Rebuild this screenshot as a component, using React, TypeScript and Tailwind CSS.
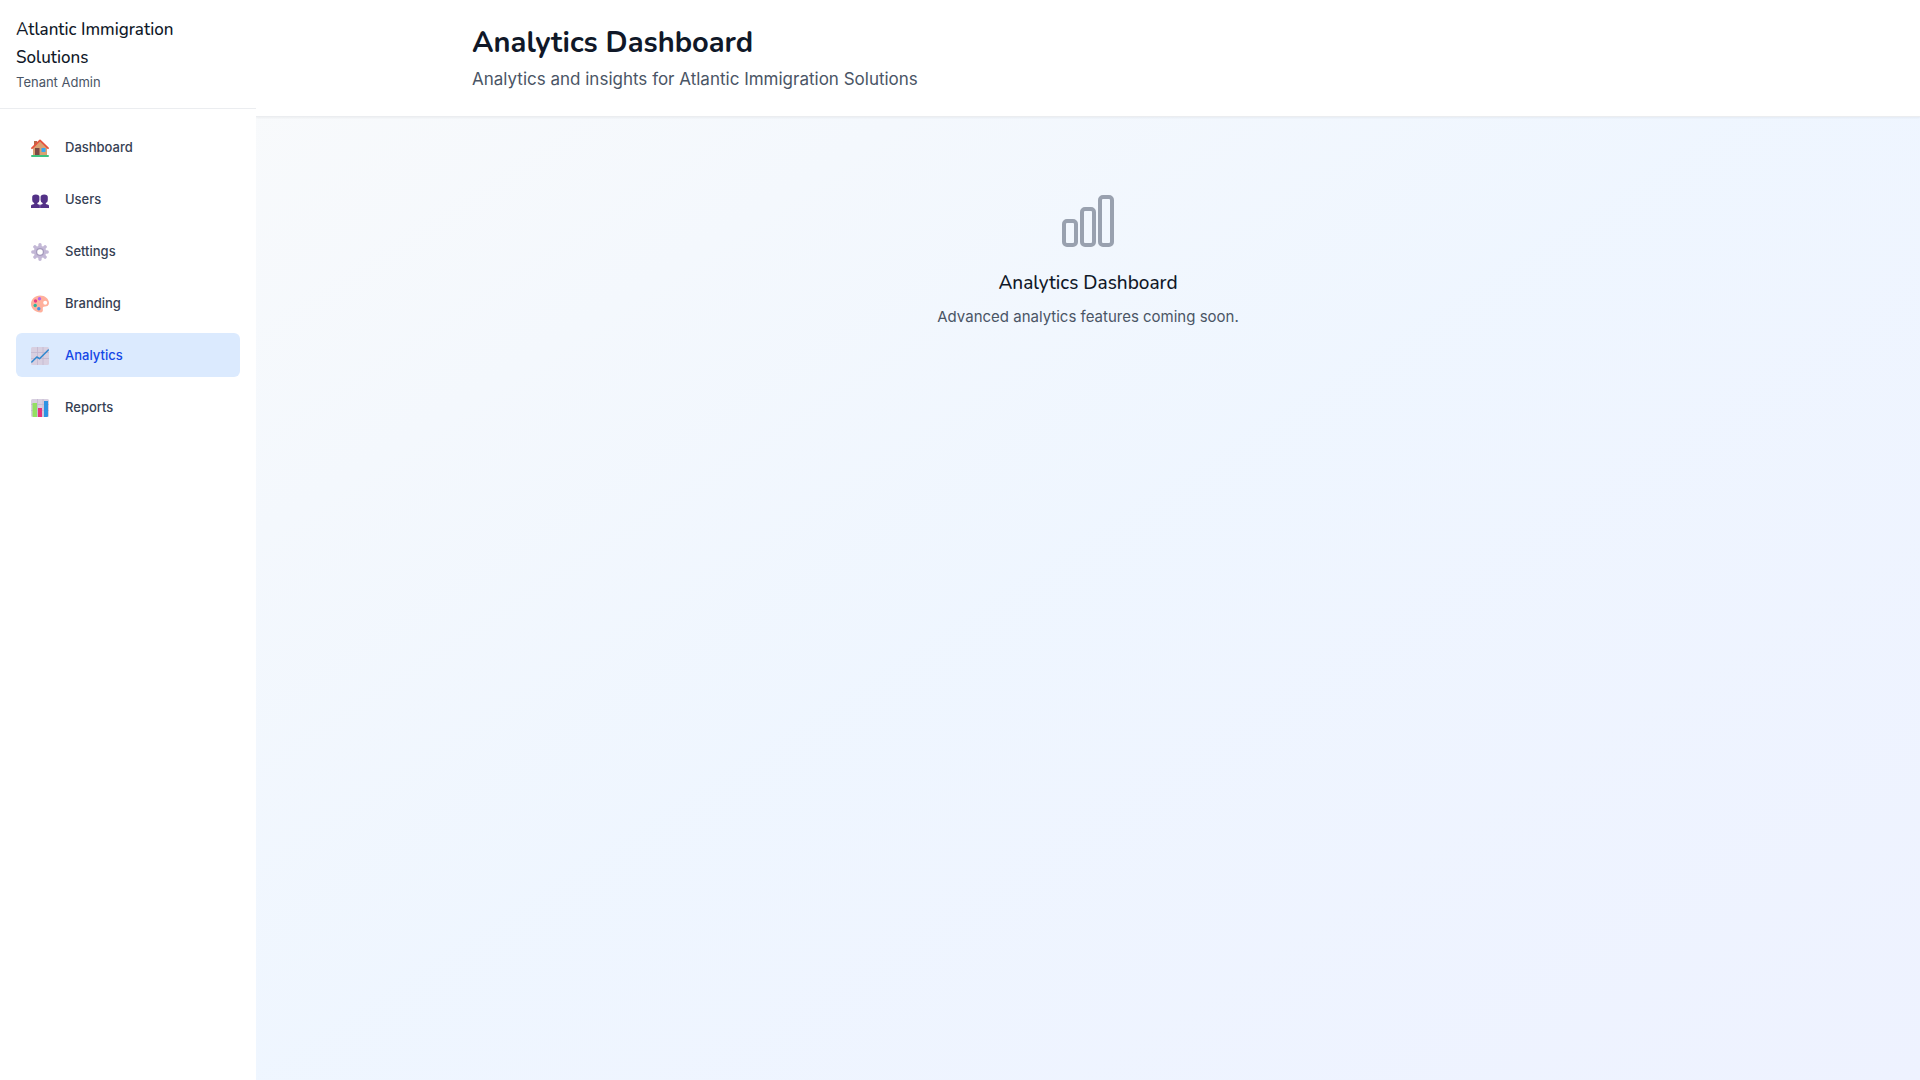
import React from "react";

function House() {
  return (
    <svg viewBox="0 0 18 18" className="size-[18px]" aria-hidden="true">
      <path d="M3 2h3v5H3z" fill="#b8694a" />
      <path d="M9 2 2 8.5V17h14V8.500z" fill="#d9a273" />
      <path d="M4 9h4.500v7H4z" fill="#7b4a45" />
      <path d="M10.500 9h4v4h-4z" fill="#35a8f0" />
      <path d="M1 9.200 9 1.400l8 7.800" fill="none" stroke="#e5533d" strokeWidth="1.800" strokeLinejoin="round" strokeLinecap="round" />
      <rect y="16" width="18" height="2" rx="1" fill="#3fc380" />
    </svg>
  );
}

function People() {
  return (
    <svg viewBox="0 0 18 18" className="size-[18px]" aria-hidden="true">
      <g fill="#533187">
        <path d="M1.200 6Q1.200 3.500 4.800 3.500T8.400 6v3q0 2.500-2 3v1q2.600.5 2.600 1.500V17H0v-2.500Q0 13.500 3.200 13v-1q-2-.5-2-3z" />
        <path d="M9.600 6q0-2.500 3.600-2.500T16.800 6v3q0 2.500-2 3v1q3.200.5 3.200 1.500V17H9v-2.500q0-1 2.600-1.500v-1q-2-.5-2-3z" />
      </g>
      <path d="M9 13.500V17" stroke="#7a57ae" />
    </svg>
  );
}

function Gear() {
  return (
    <svg viewBox="0 0 18 18" className="size-[18px]" aria-hidden="true">
      <g stroke="#c3b8d6" strokeWidth="3.400" strokeLinecap="round">
        <path d="M9 1.800v14.400M1.800 9h14.400M3.900 3.900l10.200 10.200M14.100 3.900 3.900 14.100" />
      </g>
      <circle cx="9" cy="9" r="6.200" fill="#c3b8d6" />
      <circle cx="9" cy="9" r="3.400" fill="#fff" stroke="#a398bb" strokeWidth="1.200" />
    </svg>
  );
}

function Palette() {
  return (
    <svg viewBox="0 0 18 18" className="size-[18px]" aria-hidden="true">
      <path d="M9 .5c5 0 9 3.500 9 7.500 0 2.500-2 3.500-4 3.500-1.800 0-2.500.8-2.200 2.500.4 2-.3 3.500-2.300 3.500C4.500 17.500 0 13.500 0 9S4 .5 9 .5z" fill="#ffb09c" />
      <circle cx="14.200" cy="7.800" r="2" fill="#fff" />
      <circle cx="8.500" cy="3.800" r="1.700" fill="#b565e8" />
      <circle cx="4.500" cy="6" r="1.700" fill="#e83e82" />
      <circle cx="4.200" cy="10.500" r="1.700" fill="#2fb59e" />
      <circle cx="7.800" cy="13.700" r="1.700" fill="#4390e6" />
    </svg>
  );
}

function ChartSheet() {
  return (
    <>
      <rect width="18" height="18" rx="1.500" fill="#d8cfe0" />
      <path d="M6.500 0v18M12 0v18M0 5.500h18M0 11.500h18" stroke="#c3b7cf" strokeWidth=".8" />
    </>
  );
}

function LineChart() {
  return (
    <svg viewBox="0 0 18 18" className="size-[18px]" aria-hidden="true">
      <ChartSheet />
      <path d="m.8 15 5-5 2.700 1.700L17.300 3" fill="none" stroke="#2f88cf" strokeWidth="1.500" strokeLinecap="round" strokeLinejoin="round" />
    </svg>
  );
}

function BarChart() {
  return (
    <svg viewBox="0 0 18 18" className="size-[18px]" aria-hidden="true">
      <ChartSheet />
      <path d="M1.500 4H6v14H2.500q-1 0-1-1z" fill="#93df62" />
      <path d="M7 9h4v9H7z" fill="#e5337a" />
      <path d="M13 2h4v15q0 1-1 1h-3z" fill="#2d93e3" />
    </svg>
  );
}

const items = [
  { label: "Dashboard", Icon: House },
  { label: "Users", Icon: People },
  { label: "Settings", Icon: Gear },
  { label: "Branding", Icon: Palette },
  { label: "Analytics", Icon: LineChart, active: true },
  { label: "Reports", Icon: BarChart },
];

export default function App() {
  return (
    <div className="flex min-h-screen font-['Inter',sans-serif]">
      <aside className="relative z-10 w-64 shrink-0 bg-white">
        <div className="border-b border-[#ebedf0] p-4">
          <h2 className="font-['Nunito','Lato',sans-serif] text-[17px] font-medium leading-7 text-gray-900">
            Atlantic Immigration Solutions
          </h2>
          <p className="text-[13px] leading-5 text-gray-600">Tenant Admin</p>
        </div>
        <nav className="flex flex-col gap-2 p-4">
          {items.map(({ label, Icon, active }) => (
            <a
              key={label}
              href="#"
              aria-current={active ? "page" : undefined}
              className={
                active
                  ? "flex h-11 items-center gap-4 rounded-md bg-blue-100 px-[15px] pt-0.5 text-[13px] font-medium text-blue-700"
                  : "flex h-11 items-center gap-4 rounded-md px-[15px] pt-0.5 text-[13px] font-medium text-gray-700"
              }
            >
              <Icon />
              {label}
            </a>
          ))}
        </nav>
      </aside>
      <div className="min-w-0 flex-1 bg-linear-to-br from-gray-50 via-blue-50 to-indigo-50">
        <header className="border-b border-[#ebedf0] bg-white shadow-xs">
          <div className="mx-auto max-w-7xl px-6 py-6">
            <h1 className="font-['Nunito','Lato',sans-serif] text-[29px] font-bold leading-[38px] text-gray-900">
              Analytics Dashboard
            </h1>
            <p className="mt-1 text-[17px] leading-[26px] text-gray-600">
              Analytics and insights for Atlantic Immigration Solutions
            </p>
          </div>
        </header>
        <main className="mx-auto max-w-7xl p-6">
          <div className="flex flex-col items-center py-12 text-center">
            <svg
              className="size-16 text-gray-400"
              viewBox="0 0 24 24"
              fill="none"
              stroke="currentColor"
              strokeWidth="1.5"
              strokeLinecap="round"
              strokeLinejoin="round"
              aria-hidden="true"
            >
              <rect x="3" y="12" width="4.500" height="9" rx="1.125" />
              <rect x="9.750" y="7.500" width="4.500" height="13.500" rx="1.125" />
              <rect x="16.500" y="3" width="4.500" height="18" rx="1.125" />
            </svg>
            <h3 className="mt-4 font-['Nunito','Lato',sans-serif] text-[19px] font-medium leading-7 text-gray-900">
              Analytics Dashboard
            </h3>
            <p className="mt-2 text-[15px] leading-6 text-gray-600">Advanced analytics features coming soon.</p>
          </div>
        </main>
      </div>
    </div>
  );
}
